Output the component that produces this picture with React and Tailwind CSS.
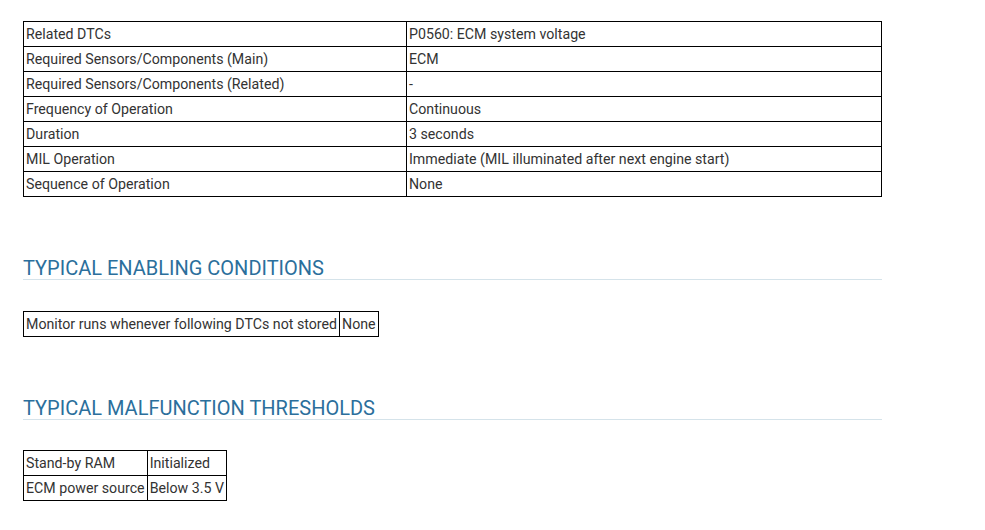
export default function App() {
  const rows = [
    ["Related DTCs", "P0560: ECM system voltage"],
    ["Required Sensors/Components (Main)", "ECM"],
    ["Required Sensors/Components (Related)", "-"],
    ["Frequency of Operation", "Continuous"],
    ["Duration", "3 seconds"],
    ["MIL Operation", "Immediate (MIL illuminated after next engine start)"],
    ["Sequence of Operation", "None"],
  ];
  const cell = "border border-black px-[2px] h-[25px] py-0 leading-[18px] text-left align-middle font-normal";
  return (
    <div className="bg-white min-h-[530px] pt-[21px] pl-[23px] text-[14.2px] text-[#333333]" style={{ fontFamily: "Roboto, 'Liberation Sans', sans-serif" }}>
      <div className="w-[859px]">
        <table className="w-[859px] border-collapse">
          <tbody>
            {rows.map(([a, b]) => (
              <tr key={a}>
                <td className={cell + " w-[383px]"}>{a}</td>
                <td className={cell}>{b}</td>
              </tr>
            ))}
          </tbody>
        </table>

        <h2 className="mt-[60px] text-[20px] leading-[22px] text-[#2b6f9c] border-b border-[#d5e3ea] uppercase">
          Typical Enabling Conditions
        </h2>
        <table className="mt-[31px] border-collapse">
          <tbody>
            <tr>
              <td className={cell}>Monitor runs whenever following DTCs not stored</td>
              <td className={cell}>None</td>
            </tr>
          </tbody>
        </table>

        <h2 className="mt-[60px] text-[20px] leading-[22px] text-[#2b6f9c] border-b border-[#d5e3ea] uppercase">
          Typical Malfunction Thresholds
        </h2>
        <table className="mt-[30px] border-collapse">
          <tbody>
            <tr>
              <td className={cell}>Stand-by RAM</td>
              <td className={cell}>Initialized</td>
            </tr>
            <tr>
              <td className={cell}>ECM power source</td>
              <td className={cell}>Below 3.5 V</td>
            </tr>
          </tbody>
        </table>
      </div>
    </div>
  );
}
